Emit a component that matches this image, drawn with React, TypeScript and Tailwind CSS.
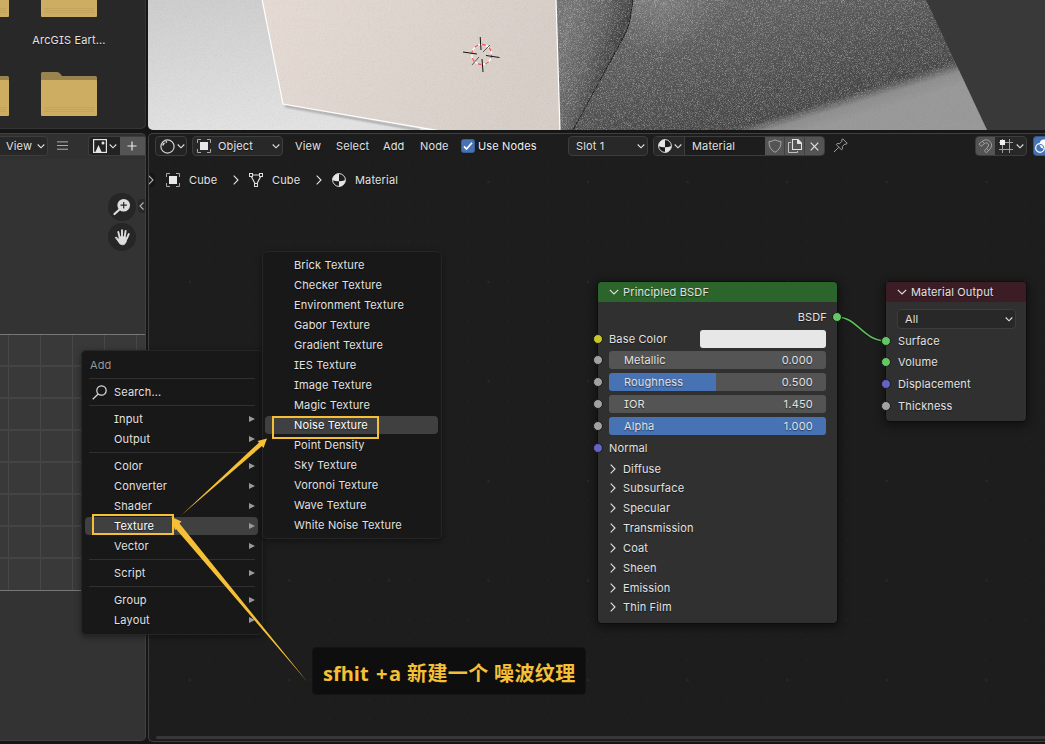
import React from "react";

const TEXTURES = [
  "Brick Texture", "Checker Texture", "Environment Texture", "Gabor Texture", "Gradient Texture",
  "IES Texture", "Image Texture", "Magic Texture", "Noise Texture", "Point Density",
  "Sky Texture", "Voronoi Texture", "Wave Texture", "White Noise Texture",
];

const GROUPS = [["Input", "Output"], ["Color", "Converter", "Shader", "Texture", "Vector"], ["Script"], ["Group", "Layout"]];

const PANELS = ["Diffuse", "Subsurface", "Specular", "Transmission", "Coat", "Sheen", "Emission", "Thin Film"];

function Chevron({ dir = "down", className = "" }: { dir?: "down" | "wide" | "right" | "left"; className?: string }) {
  const d = { down: "M1.7 3.5 5 6.8 8.3 3.5", wide: "M.8 2.8 5 7 9.2 2.8", right: "M2.7 .7 7 5 2.7 9.3", left: "M6.5 1.5 3 5 6.5 8.5" }[dir];
  return (
    <svg className={`h-[10px] w-[10px] shrink-0 ${className}`} viewBox="0 0 10 10" fill="none" stroke="currentColor" strokeWidth="1.1">
      <path d={d} />
    </svg>
  );
}

function Folder() {
  return (
    <svg className="block h-[44px] w-[56px]" viewBox="0 0 56 44">
      <path d="M0 1.5Q0 0 1.5 0H16Q18 0 19.5 2L21 4H54.5Q56 4 56 5.5V12H0Z" fill="#9a834d" />
      <path d="M0 9Q0 8 1 8H55Q56 8 56 9V43Q56 44 55 44H1Q0 44 0 43Z" fill="#ccad62" />
      <path d="M3 35.5H53M3 37.5H53M3 39.5H53" stroke="#c3a45c" strokeWidth="1" />
    </svg>
  );
}

function FolderCell({ label }: { label?: string }) {
  return (
    <div className="h-[99px] w-[56px] shrink-0">
      <Folder />
      <div className="mt-[16px] flex justify-center whitespace-nowrap leading-[14px]">{label}</div>
    </div>
  );
}

function ObjectIcon() {
  return (
    <svg className="h-[14px] w-[14px] shrink-0" viewBox="0 0 14 14" fill="none" stroke="#a8a8a8">
      <path d="M.5 4V.5H4M10 .5h3.5V4M13.5 10v3.500H10M4 13.500H.5V10" />
      <rect x="3" y="3" width="8" height="8" fill="#e8e8e8" stroke="none" />
    </svg>
  );
}

function MeshIcon() {
  return (
    <svg className="h-[14px] w-[14px] shrink-0" viewBox="0 0 14 14" fill="none" stroke="#dedede">
      <path d="M3.500 2H10.500M2.300 3.500 6 10.500M11.700 3.500 8 10.500" strokeWidth="1.200" />
      <rect x=".5" y=".5" width="3" height="3" />
      <rect x="10.500" y=".5" width="3" height="3" />
      <rect x="5.500" y="10.500" width="3" height="3" />
    </svg>
  );
}

function MaterialIcon() {
  return (
    <svg className="h-[14px] w-[14px] shrink-0" viewBox="0 0 14 14">
      <circle cx="7" cy="7" r="6.400" fill="#1d1d1d" stroke="#dcdcdc" />
      <path d="M7 .6A6.400 6.400 0 0 0 .6 7Q3.500 8.600 7 8.300Z" fill="#e6e6e6" />
      <path d="M7 8.300Q10.500 8.300 13.400 7A6.400 6.400 0 0 1 7 13.400Z" fill="#e6e6e6" />
    </svg>
  );
}

function ShaderEditorIcon() {
  return (
    <svg className="h-[15px] w-[15px] shrink-0" viewBox="0 0 15 15" fill="none" stroke="#d4d4d4">
      <circle cx="7.500" cy="7.500" r="6.600" strokeWidth="1.200" />
      <path d="M2.800 6.500Q3.200 4.800 4.500 3.800" strokeWidth="1.500" />
      <circle cx="6.300" cy="3" r=".9" fill="#d4d4d4" stroke="none" />
    </svg>
  );
}

function Viewport() {
  return (
    <svg className="block h-[130px] w-[897px]" viewBox="148 0 897 130">
      <defs>
        <linearGradient id="backdrop" x1="0" y1="0" x2="0.300" y2="1">
          <stop offset="0" stopColor="#cecece" />
          <stop offset="1" stopColor="#e3e3e3" />
        </linearGradient>
        <linearGradient id="face" x1="0" y1="0" x2="1" y2="0.200">
          <stop offset="0" stopColor="#e6dcd5" />
          <stop offset="1" stopColor="#d8cfc9" />
        </linearGradient>
        <linearGradient id="side" gradientUnits="userSpaceOnUse" x1="556" y1="60" x2="612" y2="80">
          <stop offset="0" stopColor="#727272" />
          <stop offset="0.500" stopColor="#606060" />
          <stop offset="1" stopColor="#3a3a3a" />
        </linearGradient>
        <linearGradient id="shade" gradientUnits="userSpaceOnUse" x1="700" y1="-20" x2="740" y2="120">
          <stop offset="0" stopColor="#686868" />
          <stop offset="1" stopColor="#474747" />
        </linearGradient>
        <linearGradient id="lit" gradientUnits="userSpaceOnUse" x1="830" y1="100" x2="837" y2="123">
          <stop offset="0" stopColor="#959595" stopOpacity="0" />
          <stop offset="0.450" stopColor="#959595" />
          <stop offset="1" stopColor="#a0a0a0" />
        </linearGradient>
        <radialGradient id="glow" gradientUnits="userSpaceOnUse" cx="660" cy="-5" r="60">
          <stop offset="0" stopColor="#8a8a8a" stopOpacity="0.600" />
          <stop offset="1" stopColor="#8a8a8a" stopOpacity="0" />
        </radialGradient>
        <filter id="grain" x="0" y="0" width="100%" height="100%" colorInterpolationFilters="sRGB">
          <feTurbulence type="fractalNoise" baseFrequency="1.370" numOctaves="3" seed="8" />
          <feColorMatrix values="0 0 0 0 1  0 0 0 0 1  0 0 0 0 1  1.600 0 0 0 -0.700" />
        </filter>
        <filter id="fine" x="0" y="0" width="100%" height="100%" colorInterpolationFilters="sRGB">
          <feTurbulence type="fractalNoise" baseFrequency="1.170" numOctaves="2" seed="3" />
          <feColorMatrix values="0 0 0 0 0  0 0 0 0 0  0 0 0 0 0  0.300 0 0 0 -0.120" />
        </filter>
        <filter id="soft"><feGaussianBlur stdDeviation="1" /></filter>
        <clipPath id="rough"><path d="M556 0H926L987 130H560Z" /></clipPath>
      </defs>
      <rect x="148" width="897" height="130" fill="#393939" />
      <path d="M148 0H560V130H148Z" fill="url(#backdrop)" />
      <g clipPath="url(#rough)">
        <rect x="556" width="440" height="130" fill="url(#shade)" />
        <rect x="600" width="130" height="80" fill="url(#glow)" />
        <path d="M556 0H633L630 20 622 40 572 130H560Z" fill="url(#side)" />
        <path d="M633 0 630 20Q628 30 622 40L573 130" fill="none" stroke="#171717" />
        <rect x="556" width="440" height="130" filter="url(#grain)" opacity="0.560" />
        <path d="M670 141 1000 42V130H670Z" fill="url(#lit)" opacity="0.900" />
      </g>
      <path d="M285 106 420 130" stroke="#8a8a8a" strokeWidth="1.500" filter="url(#soft)" />
      <path d="M262 0 283 104 440 130H560L556 0Z" fill="url(#face)" />
      <rect x="148" width="410" height="130" filter="url(#fine)" opacity="0.280" />
      <path d="M262 -1 283 104 440 131M556 -1 560 131" fill="none" stroke="#fff" strokeWidth="1.200" />
      <circle cx="481.700" cy="54.500" r="10" fill="none" stroke="#fff" strokeWidth="1.300" />
      <circle cx="481.700" cy="54.500" r="10" fill="none" stroke="#f25050" strokeWidth="1.300" strokeDasharray="3.930 3.930" />
      <path d="M480.200 37 481 50M482 59 483 72M463 52 477 54M486 55.500 499.500 57.500" stroke="#151515" />
      <path d="M490 45 483 52M479 57 472 65" stroke="#5c5855" />
    </svg>
  );
}

function NodeShell({ title, color, className, children }: { title: string; color: string; className: string; children: React.ReactNode }) {
  return (
    <section className={`absolute rounded-[4px] bg-[#303030] shadow-[0_2px_8px_3px_rgba(0,0,0,0.4),0_0_0_1px_rgba(10,10,10,0.45)] ${className}`}>
      <div className={`flex h-[20px] items-center rounded-t-[4px] ${color}`}>
        <Chevron dir="wide" className="mr-[4px] ml-[11px]" />
        {title}
      </div>
      {children}
    </section>
  );
}

function Socket({ color, right = false }: { color: string; right?: boolean }) {
  return (
    <i className={`absolute top-1/2 h-[10px] w-[10px] -translate-y-1/2 rounded-full border border-[#1a1a1a] ${right ? "right-[-5px]" : "left-[-5px]"} ${color}`} />
  );
}

function Slider({ label, value, fill }: { label: string; value: string; fill: string }) {
  return (
    <div className="relative flex h-[21.8px] items-center px-[11px]">
      <Socket color="bg-[#a1a1a1]" />
      <div className="flex h-[18px] flex-1 items-center justify-between overflow-hidden rounded-[3px] bg-[#545454] pr-[13px] pl-[15px]" style={{ backgroundImage: `linear-gradient(to right, #4772b3 ${fill}, transparent ${fill})` }}>
        <span>{label}</span>
        <span className="tracking-[0.2px]">{value}</span>
      </div>
    </div>
  );
}

function MenuLine() {
  return <div className="mx-[6px] flex h-[7px] shrink-0 items-center"><div className="h-px flex-1 bg-[#303030]" /></div>;
}

function Box({ className, children }: { className: string; children?: React.ReactNode }) {
  return <div className={`flex h-[20px] shrink-0 items-center rounded-[4px] border border-[#3d3d3d] ${className}`}>{children}</div>;
}

export default function App() {
  return (
    <div className="relative flex h-[744px] w-[1045px] gap-[2px] overflow-hidden bg-[#161616] font-['Inter',sans-serif] text-[11px] leading-[14px] tracking-[0.15px] text-[#e2e2e2] [font-feature-settings:'cv08'_1] [text-shadow:0_1px_1px_rgba(0,0,0,0.5)]">
      <div className="flex w-[146px] flex-col gap-[4px]">
        <div className="h-[129px] overflow-hidden rounded-br-[5px] bg-[#282828] shadow-[inset_-1px_-1px_0_#353535]">
          <div className="mt-[-27px] ml-[-47px] flex gap-[32px]">
            <div><FolderCell /><FolderCell /></div>
            <div><FolderCell label="ArcGIS Eart..." /><FolderCell /></div>
          </div>
        </div>

        <div className="flex h-[608px] flex-col overflow-hidden rounded-r-[5px] border-t border-r border-b border-[#404040] bg-[#333333]">
          <div className="flex h-[25px] shrink-0 items-start bg-[#303030] pt-[2px]">
            <Box className="w-[48px] rounded-l-none border-l-0 bg-[#282828] pl-[6px]">View<Chevron className="ml-[4px]" /></Box>
            <svg className="mt-[5px] ml-[9px] h-[10px] w-[12px]" viewBox="0 0 12 10" stroke="#bababa"><path d="M0 .5H12M0 4.500H12M0 8.500H12" /></svg>
            <Box className="ml-[20px] w-[57px] rounded-r-none border-r-0 bg-[#222222]">
              <div className="flex w-[31px] items-center pl-[4px]">
                <svg className="h-[14px] w-[14px]" viewBox="0 0 14 14"><rect x=".6" y=".6" width="12.800" height="12.800" fill="none" stroke="#e5e5e5" strokeWidth="1.200" /><path d="M2 14 5.500 6 9 14Z" fill="#e5e5e5" /><circle cx="10" cy="4" r="1.500" fill="#e5e5e5" /></svg>
                <Chevron className="ml-[1px]" />
              </div>
              <div className="flex h-full flex-1 items-center justify-center bg-[#545454] pr-[1px]">
                <svg className="h-[10px] w-[10px]" viewBox="0 0 10 10" stroke="#e8e8e8" strokeWidth="1.200"><path d="M5 .5V9.500M.5 5H9.500" /></svg>
              </div>
            </Box>
          </div>
          <div className="flex h-[175px] shrink-0 justify-end pt-[34px]">
            <div className="mr-[2px] flex flex-col gap-[2px]">
              <div className="flex h-[28px] w-[28px] items-center justify-center rounded-full bg-[#262626]">
                <svg className="h-[18px] w-[18px]" viewBox="0 0 18 18"><circle cx="10.700" cy="7.200" r="6.300" fill="#dedede" /><path d="M6.500 11.500 1.500 16" stroke="#dedede" strokeWidth="2.200" strokeLinecap="round" /><path d="M10.700 4V10.400M7.500 7.200H13.900" stroke="#262626" strokeWidth="1.200" /></svg>
              </div>
              <div className="flex h-[28px] w-[28px] items-center justify-center rounded-full bg-[#262626]">
                <svg className="h-[17px] w-[17px]" viewBox="0 0 17 17" fill="none" stroke="#dedede" strokeLinecap="round" strokeLinejoin="round">
                  <path d="M5.500 8 4.300 3M8 7.500V1.200M10.700 7.800 11.600 2M12.800 9.500 14.800 5" strokeWidth="1.900" />
                  <path d="M1.500 8.300Q2.200 7.700 3.200 8.700L5 10.500 5.300 7.800H11L12.800 9.200Q12.500 15.800 8.500 15.800 5.700 15.800 4.500 13Z" fill="#dedede" strokeWidth=".8" />
                </svg>
              </div>
            </div>
            <div className="mt-[6px] flex h-[14px] w-[7px] items-center justify-center rounded-l-[4px] bg-[#282828] text-[#b5b5b5]"><Chevron dir="left" /></div>
          </div>
          <svg className="block h-[257px] w-[145px] shrink-0" viewBox="0 333 145 257" fill="none">
            <rect x="0" y="333" width="145" height="257" fill="#393939" />
            <path d="M8.500 334V590M40.500 334V590M72.500 334V590M104.500 334V590M136.500 334V590" stroke="#474747" />
            <path d="M0 365H145M0 397H145M0 429H145M0 461H145M0 493H145M0 525H145M0 557H145" stroke="#444444" strokeWidth="2" />
            <path d="M0 333.500H145M0 589.500H145" stroke="#777777" />
          </svg>
        </div>
      </div>

      <div className="flex w-[897px] flex-col gap-[3px]">
        <div className="overflow-hidden rounded-bl-[5px]"><Viewport /></div>

        <main className="relative flex h-[609px] flex-col overflow-hidden rounded-l-[5px] border-t border-b border-l border-[#404040] bg-[#1d1d1d]">
          <svg className="absolute inset-0 h-full w-full" viewBox="149 134 896 607">
            <defs>
              <pattern id="minor" patternUnits="userSpaceOnUse" x="149.200" y="161.300" width="19.900" height="19.900"><rect width="1.200" height="1.200" fill="#262626" /></pattern>
              <pattern id="major" patternUnits="userSpaceOnUse" x="188.700" y="181.200" width="99.600" height="99.600"><rect width="2" height="2" fill="#292929" /></pattern>
            </defs>
            <rect x="149" y="160" width="896" height="575" fill="url(#minor)" />
            <rect x="149" y="160" width="896" height="575" fill="url(#major)" />
          </svg>

          <header className="relative flex h-[26px] shrink-0 items-start pt-[2px] pl-[6px]">
            <Box className="w-[32px] bg-[#232323] pl-[4px]"><ShaderEditorIcon /><Chevron className="ml-[1px]" /></Box>
            <Box className="ml-[5px] w-[91px] bg-[#282828] pl-[4px]"><ObjectIcon /><span className="ml-[7px] flex-1">Object</span><Chevron className="mr-[1px]" /></Box>
            <nav className="flex h-[20px] items-center pl-[12px]">
              <span className="w-[41px]">View</span>
              <span className="w-[47px]">Select</span>
              <span className="w-[37px]">Add</span>
              <span className="w-[41px]">Node</span>
              <svg className="h-[14px] w-[14px]" viewBox="0 0 14 14"><rect x=".5" y=".5" width="13" height="13" rx="2" fill="#4772b3" stroke="#3b5f96" /><path d="M3 7.300 5.500 10 11 3.800" fill="none" stroke="#fff" strokeWidth="1.700" /></svg>
              <span className="ml-[3px] w-[90px] text-[#f0f0f0]">Use Nodes</span>
            </nav>
            <Box className="w-[80px] bg-[#282828] pl-[7px]"><span className="flex-1">Slot 1</span><Chevron className="mr-[1px]" /></Box>
            <Box className="ml-[5px] w-[172px] overflow-hidden bg-[#1d1d1d]">
              <div className="flex h-full w-[31px] items-center gap-[1px] border-r border-[#3d3d3d] bg-[#282828] pl-[4px]"><MaterialIcon /><Chevron /></div>
              <span className="flex-1 pl-[7px]">Material</span>
              <div className="flex h-full w-[59px] divide-x divide-[#404040] bg-[#545454]">
                <div className="flex flex-1 items-center justify-center"><svg className="h-[14px] w-[14px]" viewBox="0 0 14 14" fill="none" stroke="#a5a5a5"><path d="M7 .8Q9.500 2.500 13 2.500 13.300 10 7 13.300.7 10 1 2.500 4.500 2.500 7 .8Z" /></svg></div>
                <div className="flex flex-1 items-center justify-center"><svg className="h-[14px] w-[14px]" viewBox="0 0 14 14" fill="none" stroke="#e2e2e2"><path d="M4.500.5H10L13.500 4V10.500H4.500Z" strokeWidth="1.100" /><path d="M9.500.5V4.500H13.500Z" fill="#e2e2e2" /><path d="M3 3.500H.5V13.500H9.500V12" stroke="#c0c0c0" /></svg></div>
                <div className="flex flex-1 items-center justify-center"><svg className="h-[9px] w-[9px]" viewBox="0 0 9 9" stroke="#e2e2e2" strokeWidth="1.200"><path d="M.7.7 8.300 8.300M8.300.7.7 8.300" /></svg></div>
              </div>
            </Box>
            <svg className="mt-[2px] ml-[8px] h-[15px] w-[15px]" viewBox="0 0 15 15" fill="none" stroke="#a0a0a0" strokeLinejoin="round"><path d="M9.700.8 14.200 5.300 13 6.300 11.800 6 9.300 8.500 9.500 10.800 8.500 11.800 3.200 6.500 4.200 5.500 6.500 5.700 9 3.200 8.700 1.900ZM5.800 9.200 1 14" /></svg>
            <Box className="ml-[127px] w-[52px] overflow-hidden bg-[#282828]">
              <div className="flex h-full w-[19px] items-center justify-center bg-[#545454]">
                <svg className="h-[15px] w-[15px]" viewBox="0 0 15 15" fill="none" stroke="#a0a0a0"><path d="M1 5 4.300 2.200Q8.500-.8 12 2.500 15.300 6.200 12 10L8.500 13.800 6.300 11.900 9.800 8Q11.500 5.800 9.800 4.300 8.300 3 6.500 4.500L3 7.300ZM4.300 2.200 6.300 4.500M10.500 11.500 8.400 9.600" /></svg>
              </div>
              <svg className="ml-[4px] h-[14px] w-[14px]" viewBox="0 0 14 14" stroke="#a0a0a0"><path d="M3.500 0V14M10.500 0V14M0 3.500H14M0 10.500H14" /><rect x="1" y="1" width="5" height="5" fill="#f0f0f0" stroke="none" /></svg>
              <Chevron className="ml-[2px]" />
            </Box>
            <div className="ml-[6px] flex h-[20px] w-[12px] shrink-0 items-center overflow-hidden rounded-l-[4px] border border-r-0 border-[#35578a] bg-[#4772b3]">
              <svg className="ml-[1px] h-[14px] w-[14px] shrink-0" viewBox="0 0 14 14"><circle cx="9" cy="5" r="4.500" fill="#fff" /><circle cx="5" cy="9" r="4.300" fill="none" stroke="#fff" strokeWidth="1.200" /><path d="M4.800 5.300A4.300 4.300 0 0 1 9 9.200" fill="none" stroke="#4772b3" /></svg>
            </div>
          </header>

          <div className="relative flex h-[40px] shrink-0 items-center">
            <div className="flex h-[14px] w-[6px] items-center justify-center rounded-r-[4px] bg-[#161616]"><Chevron dir="right" className="mr-[3px] text-[#b0b0b0]" /></div>
            <div className="ml-[11px] flex items-center">
              <ObjectIcon /><span className="ml-[9px] w-[42px]">Cube</span><Chevron dir="right" />
              <span className="ml-[8px] flex"><MeshIcon /></span><span className="ml-[9px] w-[42px]">Cube</span><Chevron dir="right" />
              <span className="ml-[8px] flex"><MaterialIcon /></span><span className="ml-[9px]">Material</span>
            </div>
          </div>
          <div className="relative mt-auto mb-[2px] ml-[7px] h-[3px] rounded-l-full bg-[#373737]" />
        </main>
      </div>

      <svg className="absolute top-[300px] left-[830px] h-[60px] w-[65px]" viewBox="830 300 65 60" fill="none">
        <path d="M837 317C858 317 862 341 887 341" stroke="#101010" strokeWidth="3" />
        <path d="M837 317C858 317 862 341 887 341" stroke="#5dbd5d" strokeWidth="1.700" />
      </svg>

      <NodeShell title="Principled BSDF" color="bg-[#2b652b]" className="top-[282px] left-[598px] h-[341px] w-[239px]">
        <div className="pt-[4px]">
          <div className="relative flex h-[22px] items-center justify-end pr-[10px]">BSDF<Socket right color="bg-[#63c763]" /></div>
          <div className="relative flex h-[21.4px] items-center justify-between px-[11px]">
            <Socket color="bg-[#c7c729]" />Base Color<div className="h-[18px] w-[126px] rounded-[3px] bg-[#e7e7e7]" />
          </div>
          <Slider label="Metallic" value="0.000" fill="0%" />
          <Slider label="Roughness" value="0.500" fill="49.3%" />
          <Slider label="IOR" value="1.450" fill="0%" />
          <Slider label="Alpha" value="1.000" fill="100%" />
          <div className="relative flex h-[22.8px] items-center px-[11px]"><Socket color="bg-[#6363c7]" />Normal</div>
          <div className="mt-[-0.8px]">
            {PANELS.map((p) => (
              <div key={p} className="flex h-[19.85px] items-center pl-[10px]"><Chevron dir="right" className="mr-[5px]" />{p}</div>
            ))}
          </div>
        </div>
      </NodeShell>

      <NodeShell title="Material Output" color="bg-[#3c1d26]" className="top-[282px] left-[886px] h-[139px] w-[140px]">
        <div className="pt-[7px] pr-[10px] pb-[1px] pl-[11px]">
          <Box className="w-[119px] bg-[#282828] pl-[7px]"><span className="flex-1">All</span><Chevron className="mr-[1px]" /></Box>
        </div>
        {[["Surface", "bg-[#63c763]"], ["Volume", "bg-[#63c763]"], ["Displacement", "bg-[#6363c7]"], ["Thickness", "bg-[#a1a1a1]"]].map(([name, color]) => (
          <div key={name} className="relative flex h-[21.6px] items-center pl-[12px]"><Socket color={color} />{name}</div>
        ))}
      </NodeShell>

      <div className="absolute top-[350px] left-[81px] flex h-[285px] w-[182px] flex-col rounded-[5px] border border-[#262626] bg-[#181818] px-[1px] pt-[4px] shadow-[0_2px_6px_rgba(0,0,0,0.4)]">
        <div className="flex h-[20px] shrink-0 items-center pl-[7px] text-[#999999]">Add</div>
        <MenuLine />
        <div className="flex h-[20px] shrink-0 items-center pl-[9px]">
          <svg className="mr-[7px] h-[15px] w-[15px]" viewBox="0 0 15 15" fill="none" stroke="#dcdcdc" strokeWidth="1.200"><circle cx="9.500" cy="5.500" r="4.700" /><path d="M6.200 9 .7 14.300" /></svg>
          Search...
        </div>
        {GROUPS.map((group) => (
          <React.Fragment key={group[0]}>
            <MenuLine />
            {group.map((name) => (
              <div key={name} className={`my-px mr-[3px] ml-[2px] flex h-[18px] shrink-0 items-center justify-between rounded-[4px] pr-[3px] pl-[29px] ${name === "Texture" ? "bg-[#404040] text-white" : ""}`}>
                {name}
                <svg className="h-[6px] w-[6px]" viewBox="0 0 6 6"><path d="M0 0 6 3 0 6Z" fill="#999999" /></svg>
              </div>
            ))}
          </React.Fragment>
        ))}
      </div>

      <div className="absolute top-[251px] left-[262px] flex h-[288px] w-[180px] flex-col rounded-[5px] border border-[#262626] bg-[#181818] px-[2px] pt-[3px] shadow-[0_2px_6px_rgba(0,0,0,0.4)]">
        {TEXTURES.map((name) => (
          <div key={name} className={`my-px mr-[1px] flex h-[18px] shrink-0 items-center rounded-[4px] pl-[29px] ${name === "Noise Texture" ? "bg-[#404040] text-white" : ""}`}>{name}</div>
        ))}
      </div>

      <svg className="absolute top-[410px] left-[85px] h-[280px] w-[300px]" viewBox="85 410 300 280">
        <g fill="none" stroke="#f6c036" strokeWidth="2"><rect x="93" y="515" width="80" height="19" /><rect x="273" y="417" width="105" height="21" /></g>
        <g fill="#f6c036">
          <path d="M181 515.500 259 442.500 257.500 441 267 438.500 263.500 448 262 446Z" />
          <path d="M307.500 682 176 529 175 530.500 171.500 517 181.500 521.500 179.500 523.500Z" />
        </g>
      </svg>
      <div className="absolute top-[647px] left-[312px] flex h-[48px] w-[274px] items-center rounded-[4px] border border-[#141414] bg-[#0e0e0e] pt-[5px] pl-[10px] font-['Open_Sans','Noto_Sans_CJK_SC',sans-serif] text-[20px] leading-[28px] font-bold tracking-normal whitespace-nowrap text-[#f6c036] [text-shadow:none]">
        <span className="w-[53px]">sfhit</span>
        <span className="w-[31px] tracking-[1.5px]">+a</span>
        <span className="w-[87px] tracking-[0.4px]">新建一个</span>
        <span className="tracking-[0.4px]">噪波纹理</span>
      </div>
    </div>
  );
}
